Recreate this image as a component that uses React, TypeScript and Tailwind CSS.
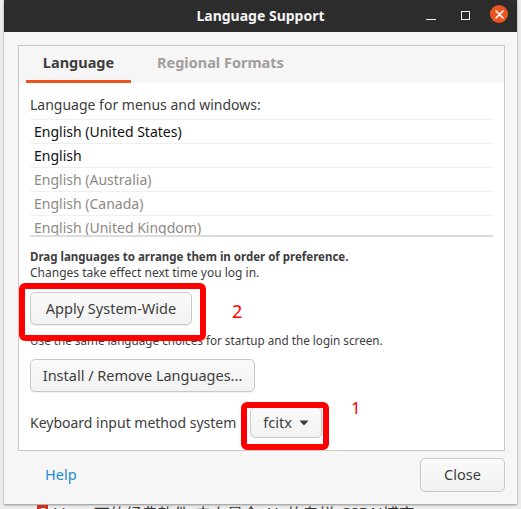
const languages = [
  { name: "English (United States)", enabled: true },
  { name: "English", enabled: true },
  { name: "English (Australia)", enabled: false },
  { name: "English (Canada)", enabled: false },
  { name: "English (United Kingdom)", enabled: false },
]

function Button({ label, width }: { label: string; width: string }) {
  return (
    <button
      className={`${width} h-[33px] rounded-[5px] border border-[#cdc7c2] bg-gradient-to-b from-[#fafafa] to-[#f2f2f2] text-[14.5px] text-[#3d3d3d] shadow-[0_1px_0_rgba(0,0,0,0.06)]`}
    >
      {label}
    </button>
  )
}

export default function App() {
  return (
    <div className="relative w-[521px] h-[509px] overflow-hidden bg-[#ececec] font-['Noto_Sans',sans-serif] text-[#3d3d3d]">
      {/* window */}
      <div className="ml-[4px] w-[513px] h-[504px] flex flex-col bg-[#f6f6f6] shadow-[0_1px_2px_rgba(0,0,0,0.4)]">
        {/* title bar */}
        <div className="h-[32px] shrink-0 bg-[#2c2c2c] grid grid-cols-[1fr_auto_1fr] items-center">
          <div />
          <div className="text-[14px] font-bold text-[#f4f4f4] leading-none">Language Support</div>
          <div className="flex items-center justify-end pr-[9px]">
            <div className="w-[10px] h-[1px] bg-[#f0f0f0] mt-[6px]" />
            <div className="ml-[25px] w-[9px] h-[9px] border border-[#f0f0f0] mb-[2px]" />
            <div className="ml-[20px] w-[18px] h-[18px] rounded-full bg-[#e95420] flex items-center justify-center mb-[4px]">
              <svg width="9" height="9" viewBox="0 0 9 9">
                <path d="M1 1L8 8M8 1L1 8" stroke="#ffffff" strokeWidth="1.6" strokeLinecap="round" />
              </svg>
            </div>
          </div>
        </div>

        {/* body */}
        <div className="flex-1 flex flex-col pt-[13px] pl-[14px] pr-[12px]">
          <div className="h-[406px] border border-[#cdc7c2] flex flex-col">
            {/* tabs */}
            <div className="h-[37px] shrink-0 flex pl-[7px]">
              <div className="w-[105px] flex flex-col">
                <div className="flex-1 flex items-center justify-center text-[14.5px] font-bold text-[#3d3d3d]">
                  Language
                </div>
                <div className="h-[3px] bg-[#e95420]" />
              </div>
              <div className="ml-[8px] px-[18px] flex items-center pb-[3px] text-[14.5px] font-bold text-[#a19e9b]">
                Regional Formats
              </div>
            </div>

            {/* page */}
            <div className="flex-1 bg-white px-[11px] pt-[12px] flex flex-col">
              <div className="text-[14px] leading-[20px]">Language for menus and windows:</div>
              <div className="mt-[4px] h-[118px] overflow-hidden border-b-2 border-[#dcdcdc]">
                {languages.map((lang) => (
                  <div
                    key={lang.name}
                    className={`h-[24px] shrink-0 border-t border-[#efefef] pl-[4px] flex items-center text-[14px] ${
                      lang.enabled ? "text-[#111111]" : "text-[#8e8985]"
                    }`}
                  >
                    {lang.name}
                  </div>
                ))}
              </div>

              <div className="mt-[12px] text-[11.5px] leading-[16px] font-bold">
                Drag languages to arrange them in order of preference.
              </div>
              <div className="text-[12px] leading-[16px]">Changes take effect next time you log in.</div>

              <div className="mt-[11px]">
                <Button label="Apply System-Wide" width="w-[162px]" />
              </div>
              <div className="mt-[7px] text-[11.7px] leading-[16px]">
                Use the same language choices for startup and the login screen.
              </div>
              <div className="mt-[11px]">
                <Button label="Install / Remove Languages..." width="w-[225px]" />
              </div>

              <div className="mt-[15px] flex items-center">
                <span className="text-[14px]">Keyboard input method system</span>
                <button className="ml-[14px] w-[72px] h-[31px] rounded-[5px] border border-[#cdc7c2] bg-gradient-to-b from-[#fafafa] to-[#f2f2f2] flex items-center pl-[12px] pr-[12px] justify-between text-[14.5px] text-[#3d3d3d]">
                  <span>fcitx</span>
                  <svg width="10" height="6" viewBox="0 0 10 6">
                    <path d="M0.5 0.5H9.5L5 5.5Z" fill="#3d3d3d" />
                  </svg>
                </button>
              </div>
            </div>
          </div>

          {/* action area */}
          <div className="mt-[7px] h-[34px] flex items-center justify-between pl-[27px]">
            <a href="#" className="text-[14.5px] text-[#1d8cd2]">Help</a>
            <button className="w-[85px] h-[34px] rounded-[5px] border border-[#cdc7c2] bg-gradient-to-b from-[#fafafa] to-[#f2f2f2] text-[14.5px] text-[#3d3d3d]">
              Close
            </button>
          </div>
        </div>
      </div>

      {/* what shows behind the window */}
      <div className="flex items-start pl-[37px] pt-[1px] gap-[5px] text-[16px] leading-[18px] text-[#333333] font-['Noto_Sans','Noto_Sans_CJK_SC',sans-serif]">
        <span className="w-[11px] h-[14px] bg-[#c9331e] text-white text-[11px] leading-[14px] text-center font-bold">C</span>
        <span>Linux下的经典软件-史上最全-AL 的专栏-CSDN博客</span>
      </div>

      {/* red annotations */}
      <div className="absolute left-[19px] top-[283px] w-[187px] h-[58px] border-[6px] border-[#ff0000] rounded-[6px]" />
      <div className="absolute left-[232px] top-[298px] text-[18px] text-[#ff0000]">2</div>
      <div className="absolute left-[241px] top-[402px] w-[88px] h-[48px] border-[6px] border-[#ff0000] rounded-[6px]" />
      <div className="absolute left-[351px] top-[395px] text-[17px] text-[#ff0000]">1</div>
    </div>
  )
}
